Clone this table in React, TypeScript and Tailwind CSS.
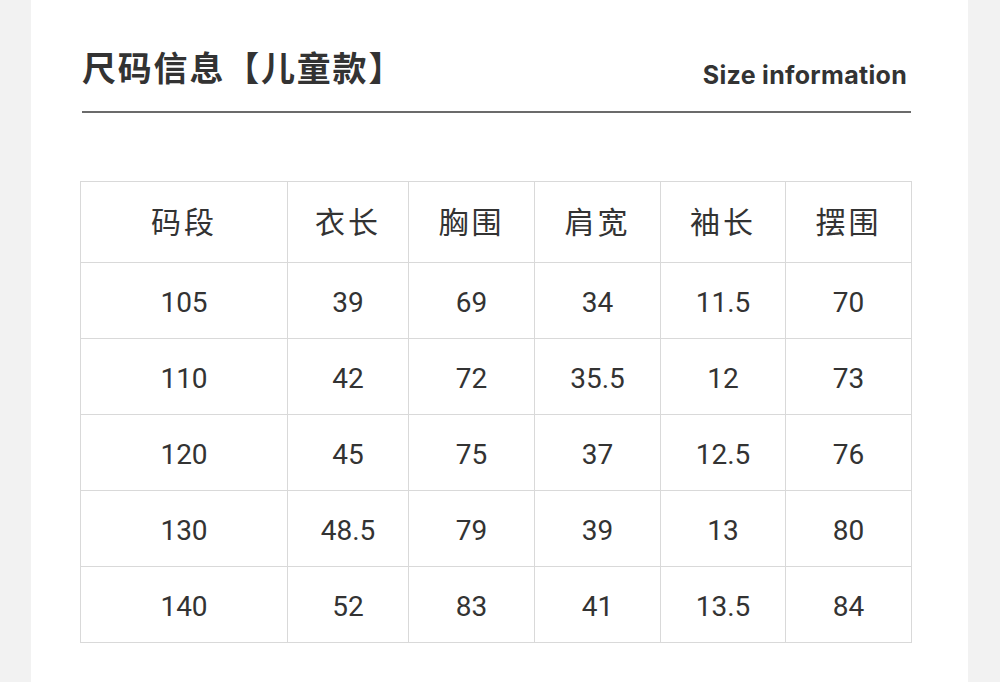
const headers = ["码段", "衣长", "胸围", "肩宽", "袖长", "摆围"];
const rows = [
  ["105", "39", "69", "34", "11.5", "70"],
  ["110", "42", "72", "35.5", "12", "73"],
  ["120", "45", "75", "37", "12.5", "76"],
  ["130", "48.5", "79", "39", "13", "80"],
  ["140", "52", "83", "41", "13.5", "84"],
];
const widths = ["w-[207px]", "w-[121px]", "w-[126px]", "w-[126px]", "w-[125px]", "w-[126px]"];

export default function App() {
  return (
    <div className="min-h-[682px] w-[1000px] bg-[#f2f2f2] [font-family:'Noto_Sans_CJK_SC',sans-serif]">
      <div className="ml-[31px] min-h-[682px] w-[937px] bg-white pl-[49px] pt-[43px]">
        <div className="flex w-[831px] items-end justify-between pl-[2px] pr-[4px]">
          <h1 className="text-[34px] font-bold leading-[48px] tracking-[1.8px] text-[#333]">尺码信息【儿童款】</h1>
          <p className="pb-[1px] text-[25px] font-bold leading-[30px] tracking-[0.3px] text-[#333] [font-family:Inter,sans-serif]">
            Size information
          </p>
        </div>
        <div className="ml-[2px] mt-[20px] h-[2px] w-[829px] bg-[#6b6b6b]" />
        <table className="mt-[68px] table-fixed border-collapse text-[#333]">
          <thead>
            <tr className="h-[81px]">
              {headers.map((h, i) => (
                <th
                  key={h}
                  className={`${widths[i]} border border-[#d9d9d9] pb-[3px] text-[30px] font-normal tracking-[3px]`}
                >
                  {h}
                </th>
              ))}
            </tr>
          </thead>
          <tbody>
            {rows.map((r) => (
              <tr key={r[0]} className="h-[76px]">
                {r.map((c, i) => (
                  <td
                    key={i}
                    className="border border-[#d9d9d9] pt-[4px] text-center text-[28px] [font-family:Roboto,sans-serif]"
                  >
                    {c}
                  </td>
                ))}
              </tr>
            ))}
          </tbody>
        </table>
      </div>
    </div>
  );
}
